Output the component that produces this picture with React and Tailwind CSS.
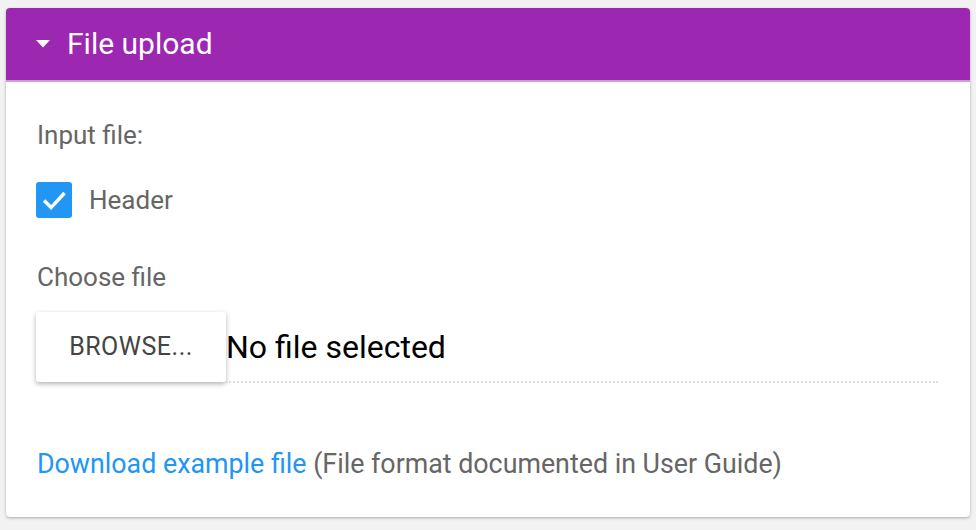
const App = () => {
  return (
    <div
      className="min-h-[530px] bg-[#f2f2f2] pt-2 px-[6px] pb-3"
      style={{ fontFamily: 'Roboto, "Liberation Sans", sans-serif' }}
    >
      <div className="bg-white rounded-[4px] shadow-[0_1px_3px_rgba(0,0,0,0.3)] overflow-hidden">
        {/* Header */}
        <div className="h-[74px] bg-[#9c27b0] border-b-2 border-[#cf9bd7] flex items-center pl-[30px]">
          <svg width="14" height="8" viewBox="0 0 14 8" className="mr-[17px]">
            <path d="M0 0 L14 0 L7 7.5 Z" fill="#fff" />
          </svg>
          <span className="text-white text-[30px] leading-none">File upload</span>
        </div>

        {/* Body */}
        <div className="pl-[30px] pr-[32px] pt-[38px] pb-[38px] text-[#666]">
          <div className="text-[26px] leading-[30px] pl-[1px]">Input file:</div>

          <div className="flex items-center mt-[32px]">
            <div className="w-9 h-9 rounded-[3px] bg-[#2196f3] flex items-center justify-center">
              <svg width="28" height="28" viewBox="0 0 24 24">
                <path
                  d="M3.5 12.5 L9.5 18.5 L21 6"
                  fill="none"
                  stroke="#fff"
                  strokeWidth="3"
                />
              </svg>
            </div>
            <span className="ml-[17px] text-[26px] leading-none">Header</span>
          </div>

          <div className="text-[26px] leading-[30px] mt-[44px] pl-[1px]">Choose file</div>

          <div className="flex items-end mt-[20px]">
            <button className="w-[190px] h-[70px] bg-white rounded-[3px] shadow-[0_2px_5px_rgba(0,0,0,0.3)] text-[#444] text-[25px] tracking-[0.5px] shrink-0">
              BROWSE...
            </button>
            <div className="flex-1 h-[70px] flex items-center border-b-2 border-dotted border-[#ddd] text-black text-[32px] mb-[-1px]">
              No file selected
            </div>
          </div>

          <div className="mt-[67px] text-[26.8px] leading-[30px] pl-[1px]">
            <a className="text-[#2196f3]">Download example file</a>{' '}
            (File format documented in User Guide)
          </div>
        </div>
      </div>
    </div>
  );
};

export default App;
